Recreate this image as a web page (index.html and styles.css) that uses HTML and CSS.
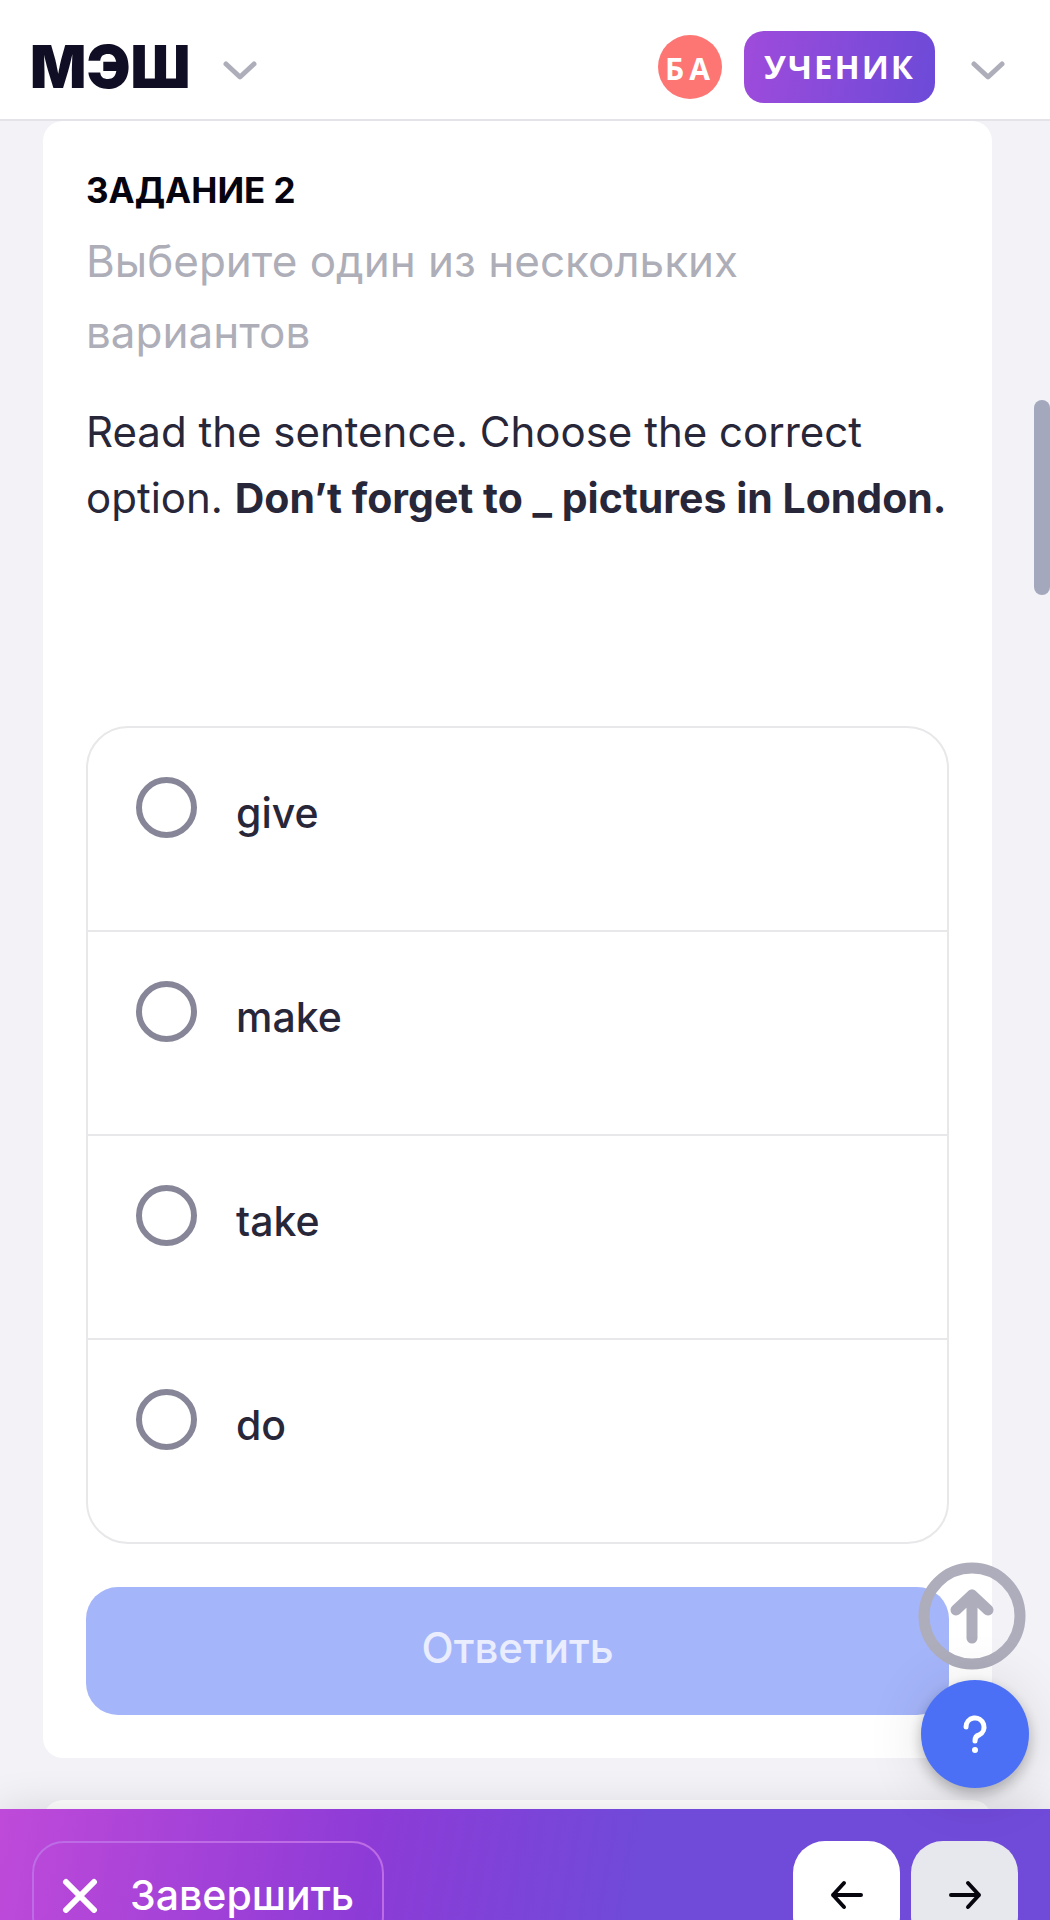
FILE: index.html
```
<!DOCTYPE html>
<html lang="ru">
<head>
  <meta charset="UTF-8" />
  <meta name="viewport" content="width=device-width, initial-scale=1" />
  <title>МЭШ - Задание 2</title>
  <link rel="stylesheet" href="styles.css">
</head>
<body>

  <header class="header">
    <a href="#" class="logo">МЭШ</a>
    <button type="button" class="chevron" aria-label="Меню">
      <svg width="34" height="20" viewBox="0 0 34 20"><path d="M3 3 L17 16 L31 3" /></svg>
    </button>
    <div class="user">
      <span class="avatar">БА</span>
      <button type="button" class="role">УЧЕНИК</button>
      <button type="button" class="chevron" aria-label="Профиль">
        <svg width="34" height="20" viewBox="0 0 34 20"><path d="M3 3 L17 16 L31 3" /></svg>
      </button>
    </div>
  </header>

  <main class="content">
    <form class="card">
      <h1 class="card-title">ЗАДАНИЕ 2</h1>
      <p class="hint">Выберите один из нескольких вариантов</p>
      <p class="question">Read the sentence. Choose the correct option. <b>Don’t forget to _ pictures in London.</b></p>

      <div class="options">
        <div class="option">
          <input type="radio" name="answer" id="give" />
          <label for="give">give</label>
        </div>
        <div class="option">
          <input type="radio" name="answer" id="make" />
          <label for="make">make</label>
        </div>
        <div class="option">
          <input type="radio" name="answer" id="take" />
          <label for="take">take</label>
        </div>
        <div class="option">
          <input type="radio" name="answer" id="do" />
          <label for="do">do</label>
        </div>
      </div>

      <button type="submit" class="answer" disabled>Ответить</button>
    </form>

    <section class="card card-next"></section>
  </main>

  <footer class="bottom-bar">
    <button type="button" class="finish">
      <svg width="36" height="36" viewBox="0 0 36 36"><path d="M4 5 L32 33 M32 5 L4 33" /></svg>
      Завершить
    </button>
    <div class="nav">
      <button type="button" class="nav-btn" aria-label="Назад">
        <svg width="34" height="30" viewBox="0 0 34 30"><path d="M31 15 H3 M14 3 L3 15 L14 27" /></svg>
      </button>
      <button type="button" class="nav-btn nav-next" aria-label="Вперёд">
        <svg width="34" height="30" viewBox="0 0 34 30"><path d="M3 15 H31 M20 3 L31 15 L20 27" /></svg>
      </button>
    </div>
  </footer>

  <!-- Кнопки поверх страницы -->
  <div class="floating">
    <button type="button" class="to-top" aria-label="Наверх">
      <svg width="108" height="108" viewBox="0 0 108 108">
        <circle cx="54" cy="54" r="48" />
        <path d="M54 76 V33 M38 48 L54 33 L70 48" />
      </svg>
    </button>
    <button type="button" class="help" aria-label="Помощь">
      <svg width="26" height="40" viewBox="0 0 26 40">
        <path d="M4 13 A9 9 0 1 1 17 21 Q13 22 13 27" />
        <circle cx="13" cy="36" r="3" />
      </svg>
    </button>
  </div>
  <div class="scroll-thumb"></div>

</body>
</html>
```
FILE: styles.css
```
* {
  box-sizing: border-box;
}

body {
  font-family: Inter, "Open Sans", sans-serif;
  background-color: #f2f2f7;
  color: #28273a;
  margin: 0;
  height: 100vh;
  overflow: hidden;
}

h1, p {
  margin: 0;
}

button {
  font-family: inherit;
  border: none;
  padding: 0;
  cursor: pointer;
}

svg {
  display: block;
  fill: none;
  stroke-linecap: round;
  stroke-linejoin: round;
}

/* Шапка */
.header {
  display: flex;
  align-items: center;
  height: 121px;
  padding: 14px 45px 0 30px;
  background: #fff;
  border-bottom: 2px solid #e3e3e8;
}

.logo {
  font-size: 59px;
  font-weight: 900;
  line-height: 64px;
  color: #0f0e24;
  text-decoration: none;
}

.chevron {
  background: none;
  margin-top: 8px;
}

.logo + .chevron {
  margin-left: 33px;
}

.chevron svg {
  stroke: #aeaebb;
  stroke-width: 5;
}

.user {
  display: flex;
  align-items: center;
  margin-left: auto;
}

.avatar {
  width: 64px;
  height: 64px;
  line-height: 68px;
  border-radius: 50%;
  background: #fd7674;
  color: #fff;
  font-family: "Open Sans", sans-serif;
  font-size: 30px;
  font-weight: 700;
  letter-spacing: 5px;
  text-align: center;
}

.role {
  height: 72px;
  margin: 0 36px 0 22px;
  padding: 0 20px;
  border-radius: 20px;
  background: linear-gradient(100deg, #9f4bdb, #6c4ad8);
  color: #fff;
  font-family: "Open Sans", sans-serif;
  font-size: 33px;
  font-weight: 700;
  letter-spacing: 2px;
}

/* Задание */
.content {
  padding: 0 58px 0 43px;
}

.card {
  background: #fff;
  border-radius: 20px;
  padding: 43px;
}

.card-title {
  font-size: 35px;
  font-weight: 700;
  line-height: 52px;
  color: #05040f;
}

.hint {
  margin-top: 10px;
  font-size: 44px;
  line-height: 71px;
  color: #aeaeb9;
}

.question {
  margin: 31px 0 195px;
  font-size: 42px;
  line-height: 66px;
}

.question b {
  font-size: 41px;
}

.options {
  border: 2px solid #e8e8ea;
  border-radius: 42px;
}

.option {
  display: flex;
  align-items: flex-start;
  gap: 39px;
  padding: 49px 48px 81px;
}

.option + .option {
  border-top: 2px solid #e8e8ea;
}

/* высота строки больше кружка, поэтому текст чуть ниже */
.option input {
  appearance: none;
  flex: none;
  width: 61px;
  height: 61px;
  margin: 0;
  border: 6px solid #868698;
  border-radius: 50%;
}

.option input:checked {
  border-width: 18px;
  border-color: #4b70f5;
}

.option label {
  font-size: 41px;
  font-weight: 500;
  line-height: 72px;
}

.answer {
  width: 100%;
  height: 128px;
  margin-top: 43px;
  padding-bottom: 8px;
  border-radius: 32px;
  background: #a5b5fa;
  color: #e9edfe;
  font-size: 42px;
  font-weight: 500;
}

.card-next {
  margin-top: 42px;
}

/* Нижняя панель */
.bottom-bar {
  position: relative;
  display: flex;
  justify-content: space-between;
  margin-top: -77px;
  padding: 32px;
  background: linear-gradient(100deg, #bf4ad9, #8d3bd7 35%, #704ad9 60%);
  box-shadow: 0 0 40px rgba(0, 0, 0, 0.12);
}

.finish {
  display: flex;
  align-items: center;
  gap: 32px;
  height: 107px;
  padding: 0 28px;
  border: 2px solid #bd6ce6;
  border-radius: 32px;
  background: none;
  color: #fff;
  font-size: 41px;
  font-weight: 500;
}

.finish svg {
  stroke: #fff;
  stroke-width: 6;
}

.nav {
  display: flex;
  gap: 11px;
}

.nav-btn {
  display: flex;
  align-items: center;
  justify-content: center;
  width: 107px;
  height: 107px;
  border-radius: 32px;
  background: #fff;
}

.nav-btn svg {
  stroke: #07060f;
  stroke-width: 4;
}

.nav-next {
  background: #e7e7ee;
}

/* Поверх страницы */
.floating {
  position: fixed;
  right: 21px;
  bottom: 132px;
  display: flex;
  flex-direction: column;
  align-items: flex-end;
  gap: 10px;
}

.to-top {
  margin-right: 3px;
  background: none;
}

.to-top svg {
  stroke: #aeadbb;
  stroke-width: 11;
}

.help {
  display: flex;
  align-items: center;
  justify-content: center;
  width: 108px;
  height: 108px;
  border-radius: 50%;
  background: #4b70f5;
  box-shadow: 0 6px 14px rgba(0, 0, 0, 0.25), 0 4px 60px rgba(0, 0, 0, 0.12);
}

.help path {
  stroke: #fff;
  stroke-width: 5;
}

.help circle {
  fill: #fff;
}

.scroll-thumb {
  position: fixed;
  top: 400px;
  right: 0;
  width: 16px;
  height: 195px;
  border-radius: 8px;
  background: #a3a8bc;
}
```
